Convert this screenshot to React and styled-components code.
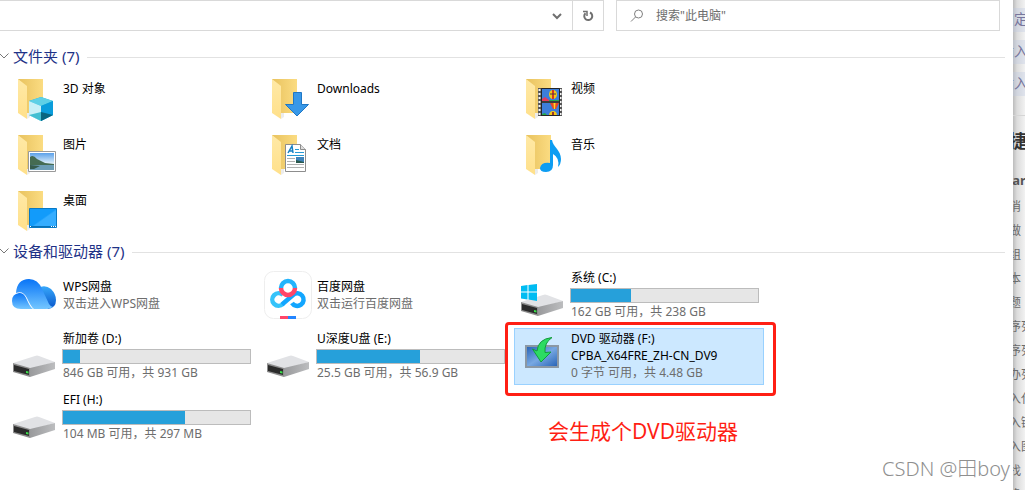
import React, { useState } from "react";
import styled, { createGlobalStyle } from "styled-components";

const GlobalStyle = createGlobalStyle`
  * {
    box-sizing: border-box;
  }
  body {
    margin: 0;
    background: #fff;
    font-family: "Noto Sans", "Noto Sans CJK SC", sans-serif;
    font-size: 12px;
    line-height: 17px;
    color: #000;
  }
`;

const Page = styled.div`
  display: flex;
  height: 100vh;
  overflow: hidden;
  position: relative;
`;
const Explorer = styled.main`
  flex: 1;
  min-width: 0;
`;
const Toolbar = styled.header`
  display: grid;
  grid-template-columns: 604fr 384fr;
  gap: 12px;
  height: 31px;
  padding-right: 13px;
`;
const AddressBar = styled.div`
  display: flex;
  justify-content: flex-end;
  border: 1px solid #d9d9d9;
  border-left: none;
`;
const BarButton = styled.button`
  width: 31px;
  padding: 0;
  border: none;
  border-left: ${(props) => (props.$divided ? "1px solid #d9d9d9" : "none")};
  background: none;
  display: flex;
  align-items: center;
  justify-content: center;
`;
const SearchBox = styled.label`
  display: flex;
  align-items: center;
  gap: 12px;
  padding-left: 13px;
  border: 1px solid #d9d9d9;
`;
const SearchInput = styled.input`
  flex: 1;
  min-width: 0;
  border: none;
  outline: none;
  padding: 0;
  background: none;
  font: inherit;
  &::placeholder {
    color: #6d6d6d;
    opacity: 1;
  }
`;
const Content = styled.div`
  padding: 13px 8px 0 0;
`;
const GroupTitle = styled.h2`
  display: flex;
  align-items: center;
  height: 26px;
  margin: 0;
  font-size: 15px;
  line-height: 24px;
  font-weight: 400;
  color: #1e3287;
  &::after {
    content: "";
    flex: 1;
    height: 1px;
    margin-left: 8px;
    background: #e2e2e2;
  }
`;
const GroupToggle = styled.button`
  display: flex;
  align-items: center;
  gap: 4px;
  height: 26px;
  padding: 0 0 2px;
  border: none;
  background: none;
  font: inherit;
  color: inherit;
`;
const Tiles = styled.div`
  display: grid;
  grid-template-columns: repeat(auto-fill, 250px);
  gap: 4px;
  padding: 2px 0 3px 6px;
`;
const Tile = styled.div`
  position: relative;
  display: flex;
  gap: 4px;
  height: ${(props) => (props.$folder ? "52px" : "57px")};
  padding: 0 5px 0 4px;
  background: ${(props) => (props.$selected ? "#cce8ff" : "none")};
  box-shadow: ${(props) =>
    props.$selected ? "inset 0 0 0 1px #99d1ff" : "none"};
`;
const TileIcon = styled.svg`
  flex: none;
  width: 48px;
  height: 48px;
  margin-top: ${(props) => (props.$folder ? "3px" : "4px")};
`;
const TileText = styled.div`
  flex: 1;
  min-width: 0;
  display: flex;
  flex-direction: column;
  justify-content: ${(props) => (props.$folder ? "flex-start" : "center")};
  padding-top: ${(props) => (props.$folder ? "9px" : "0")};
`;
const Line = styled.div`
  height: 17px;
  padding-left: 1px;
  line-height: 15px;
  white-space: nowrap;
  color: ${(props) => (props.$muted ? "#6d6d6d" : "#000")};
`;
const UsageBar = styled.div`
  height: 15px;
  margin: 1px 0;
  border: 1px solid #bcbcbc;
  background: #e6e6e6;
`;
const UsageFill = styled.div`
  height: 100%;
  background: #26a0da;
`;
const RedFrame = styled.div`
  position: absolute;
  inset: -6px -12px -11px -9px;
  border: 3px solid #ff1f14;
  border-radius: 4px;
`;
const RedNote = styled.div`
  position: absolute;
  top: 89px;
  left: 34px;
  font-size: 21px;
  line-height: 28px;
  white-space: nowrap;
  color: #ff1f14;
`;
const SidePanel = styled.aside`
  width: 12px;
  overflow: hidden;
  padding-top: 8px;
  color: #6b6b6b;
  background: linear-gradient(to right, #bcbcbc, #dcdcdc 4px, #f2f2f2);
`;
const SideChip = styled.div`
  height: 24px;
  margin-bottom: 8px;
  font-size: 14px;
  line-height: 22px;
  white-space: nowrap;
  text-indent: -13px;
  color: #77769c;
  background: rgba(190, 200, 225, 0.35);
`;
const SideHeading = styled.div`
  height: 52px;
  margin-top: 19px;
  border-top: 1px solid #d5d5d5;
  font-size: 18px;
  line-height: 50px;
  font-weight: 700;
  white-space: nowrap;
  text-indent: -4px;
  color: #333;
`;
const SideSubheading = styled.div`
  height: 28px;
  font-size: 13px;
  line-height: 26px;
  font-weight: 700;
  white-space: nowrap;
  text-indent: -13px;
  color: #555;
`;
const SideItem = styled.div`
  height: 24px;
  font-size: 12px;
  line-height: 24px;
  white-space: nowrap;
  text-indent: -16px;
`;
const Watermark = styled.div`
  position: absolute;
  right: 15px;
  bottom: 7px;
  font-size: 20px;
  line-height: 28px;
  font-weight: 300;
  color: #8f8f8f;
  text-shadow: 1px 1px 0 #fff;
`;

const FolderShape = () => (
  <>
    <path d="M8 4H33V38H8Z" fill="url(#folderBack)" />
    <path d="M8 4L17 11V44L8 38Z" fill="url(#folderFront)" />
    <path d="M17 38V44L20 42V38Z" fill="#d9d9d9" opacity="0.5" />
  </>
);

const DriveShape = () => (
  <>
    <path d="M3 31L25 24Q27 23 29 24L45 30L20 37Z" fill="#e1e2e5" />
    <path d="M20 36L45 30V37L20 45Z" fill="url(#driveSide)" />
    <path d="M3 31L20 36V45L3 40Z" fill="#8d8d8d" />
    <path d="M4 33L19 37V43L4 39Z" fill="#2b2b2b" />
    <path d="M16 39L18.500 39.500V41.500L16 41Z" fill="#3be04a" />
  </>
);

const folderArt = {
  cube: (
    <>
      <path d="M19 26L31 22L43 26V40L31 46L19 40Z" fill="#17b3d8" />
      <path d="M19 26L31 22L43 26L31 31Z" fill="#5fd0e6" />
      <path d="M19 26L31 31V46L19 40Z" fill="#c9f0f7" />
      <path d="M31 31L43 26V40L31 46Z" fill="#0a9ddb" />
      <path d="M19 40L31 37V46Z" fill="#43bfd2" />
      <path d="M31 37L43 40L31 46Z" fill="#08657f" />
    </>
  ),
  download: (
    <path
      d="M29.500 17.500H37.500V29.500H44.500L33 41L21.500 29.500H29.500Z"
      fill="#3898e8"
      stroke="#1f77c5"
    />
  ),
  video: (
    <>
      <path d="M20 13H44V41H20Z" fill="#555" />
      <path
        d="M21.500 14V41M42.500 14V41"
        stroke="#f4f4f4"
        strokeWidth="2"
        strokeDasharray="2 2"
      />
      <path d="M24 14H41V26H24ZM24 28H41V41H24Z" fill="#3d7edb" />
      <path d="M24 24L27 22L31 25L34 26H24Z" fill="#e63b5c" />
      <path d="M31 25H41V26H31ZM24 39L27 38L30 41H24Z" fill="#25a94b" />
      <ellipse cx="35" cy="19.500" rx="4" ry="4.500" fill="#f5c816" />
      <path d="M34 15H36L36 24H34Z" fill="#d63820" />
      <path d="M32 19H38" stroke="#4a3a4a" />
      <path d="M32 28H41L38 34H35Z" fill="#e84824" />
      <path d="M35.500 28H37.500L37 34H36Z" fill="#f8db25" />
      <path d="M31 41Q31 36 35 36T39 41Z" fill="#f5c816" />
      <path d="M34 37H36V41H34Z" fill="#9a3430" />
      <path d="M23.500 41V13.500H41.500V41M24 27H41M24 40.500H41" stroke="#252525" fill="none" />
    </>
  ),
  picture: (
    <>
      <path d="M18.500 20.500H45.500V40.500H18.500Z" fill="#fff" stroke="#9a9a9a" />
      <path d="M20 22H44V39H20Z" fill="url(#sky)" />
      <path d="M20 26Q23 23 27 28L35 32L44 33V35H20Z" fill="#456b52" />
      <path d="M20 34H44V39H20Z" fill="#6c9db5" />
      <path d="M20 34L30 35L24 38H20Z" fill="#365b4c" />
    </>
  ),
  document: (
    <>
      <path d="M21.500 13.500H36.500L41.500 18.500V40.500H21.500Z" fill="#fff" stroke="#8d8d8d" />
      <path d="M36.500 13.500V18.500H41.500" fill="#ddd" stroke="#8d8d8d" />
      <path d="M24 22L28 15L29 22M25.500 20H29" fill="none" stroke="#1680c4" strokeWidth="1.500" />
      <path d="M31 18.500H35M31 21.500H40M23 24.500H40" stroke="#269ad6" />
      <path d="M23 27.500H31M23 30.500H31M23 33.500H40M23 36.500H40" stroke="#b0b0b0" />
      <path d="M32 26H40V32H32Z" fill="#3f83ba" />
      <path d="M32 29L40 31V32H32Z" fill="#29584c" />
    </>
  ),
  music: (
    <path
      d="M32 9H34C35 16 43 19 43 28Q43 33 40 36Q42 27 35 23V34Q35 41 28 41Q22 41 22 37Q23 31 32 32Z"
      fill="#0d9df2"
    />
  ),
  desktop: (
    <>
      <path d="M19.500 21.500H46.500V40.500H19.500Z" fill="url(#desk)" stroke="#0879c4" />
      <path d="M20 39.500H46" stroke="#0872b8" />
      <path d="M20 39.500H21M41 39.500H42M43 39.500H44M45 39.500H46" stroke="#fff" />
    </>
  ),
};

const deviceArt = {
  wps: (
    <>
      <path d="M28 17Q35 13 41 18Q46 23 46 29Q46 37 38 38L28 27Z" fill="url(#cloudBack)" />
      <path d="M6 22Q7 8 19 8Q28 8 32 18L39 33Q41 36 43 36Q40 38 36 38H24Q21 36 17 27Q13 19 6 22Z" fill="url(#cloud)" />
      <path d="M11 38Q2 38 2 30Q2 23 9 22Q14 21 17 29Q20 36 23 38Z" fill="url(#cloud)" />
    </>
  ),
  baidu: (
    <>
      <rect x="0.500" y="0.500" width="47" height="47" rx="9" fill="#fff" stroke="#eee" />
      <g fill="none" strokeWidth="4.500">
        <path d="M19 33A6.300 6.300 0 1 1 19 24" stroke="#35c3fa" />
        <path d="M18 33.500L29 24A6.300 6.300 0 1 1 28 32" stroke="#12a6ff" />
        <path d="M17 17A7 7 0 0 1 31 17" stroke="#22b4fc" />
        <path d="M17 17A7 7 0 0 0 31 17" stroke="#ff4669" />
      </g>
      <path d="M16 45H24V48H16Z" fill="#ff4669" />
      <path d="M24 45H32V48H24Z" fill="#2385ff" />
    </>
  ),
  drive: <DriveShape />,
  system: (
    <>
      <DriveShape />
      <path d="M3 15L9.500 14V20.500H3ZM10.500 14L19 13V20.500H10.500ZM3 21.500H9.500V28.500L3 27.500ZM10.500 21.500H19V30L10.500 28.500Z" fill="#00bcf2" />
    </>
  ),
  dvd: (
    <>
      <path d="M8 14H40V35H8Z" fill="url(#screen)" stroke="#8b98a4" strokeWidth="2" />
      <path d="M34 5.500Q20 7 19 19L14.500 17L23 30L33 20L27 20.500Q26 11 34 5.500Z" fill="#2cdb62" stroke="#139b3d" />
    </>
  ),
};

const folders = [
  { name: "3D 对象", art: "cube" },
  { name: "Downloads", art: "download" },
  { name: "视频", art: "video" },
  { name: "图片", art: "picture" },
  { name: "文档", art: "document" },
  { name: "音乐", art: "music" },
  { name: "桌面", art: "desktop" },
];

const devices = [
  { name: "WPS网盘", info: "双击进入WPS网盘", art: "wps" },
  { name: "百度网盘", info: "双击运行百度网盘", art: "baidu" },
  { name: "系统 (C:)", info: "162 GB 可用，共 238 GB", used: 32, art: "system" },
  { name: "新加卷 (D:)", info: "846 GB 可用，共 931 GB", used: 9, art: "drive" },
  { name: "U深度U盘 (E:)", info: "25.5 GB 可用，共 56.9 GB", used: 55, art: "drive" },
  {
    name: "DVD 驱动器 (F:)",
    label: "CPBA_X64FRE_ZH-CN_DV9",
    info: "0 字节 可用，共 4.48 GB",
    art: "dvd",
    note: "会生成个DVD驱动器",
  },
  { name: "EFI (H:)", info: "104 MB 可用，共 297 MB", used: 65, art: "drive" },
];

const sideItems = [
  "撤消", "重做", "粗组", "斜本", "标题", "有序列", "无序列",
  "待办列", "插入代", "插入链", "插入图", "查找", "替换",
];

const Gradients = () => (
  <svg width="0" height="0" style={{ position: "absolute" }} aria-hidden="true">
    <defs>
      <linearGradient id="folderBack">
        <stop stopColor="#e8c25e" />
        <stop offset="1" stopColor="#fbdc82" />
      </linearGradient>
      <linearGradient id="folderFront" x2="0" y2="1">
        <stop stopColor="#ffe9a6" />
        <stop offset="1" stopColor="#ffe08a" />
      </linearGradient>
      <linearGradient id="driveSide">
        <stop stopColor="#999a9c" />
        <stop offset="1" stopColor="#bcbdbf" />
      </linearGradient>
      <linearGradient id="sky" x2="0" y2="1">
        <stop stopColor="#5aa0ea" />
        <stop offset="0.600" stopColor="#dcedf8" />
      </linearGradient>
      <linearGradient id="desk" y2="1">
        <stop offset="0.500" stopColor="#129bfa" />
        <stop offset="0.550" stopColor="#35adff" />
      </linearGradient>
      <linearGradient id="cloud" x2="0" y2="1">
        <stop stopColor="#0874f7" />
        <stop offset="1" stopColor="#74c6ff" />
      </linearGradient>
      <linearGradient id="cloudBack" x2="0" y2="1">
        <stop stopColor="#38a9fb" />
        <stop offset="1" stopColor="#0754c9" />
      </linearGradient>
      <linearGradient id="screen" y2="1">
        <stop stopColor="#2460b4" />
        <stop offset="0.500" stopColor="#77a8e2" />
        <stop offset="1" stopColor="#2460b4" />
      </linearGradient>
    </defs>
  </svg>
);

const Group = ({ title, children }) => {
  const [open, setOpen] = useState(true);
  return (
    <section>
      <GroupTitle>
        <GroupToggle aria-expanded={open} onClick={() => setOpen(!open)}>
          <svg width="9" height="8" fill="none" stroke="#777">
            <path d="M0 2L4 6L8.500 1.500" />
          </svg>
          {title}
        </GroupToggle>
      </GroupTitle>
      {open && <Tiles>{children}</Tiles>}
    </section>
  );
};

const Folder = ({ name, art }) => (
  <Tile $folder>
    <TileIcon $folder viewBox="0 0 48 48" aria-hidden="true">
      <FolderShape />
      {folderArt[art]}
    </TileIcon>
    <TileText $folder>
      <Line>{name}</Line>
    </TileText>
  </Tile>
);

const Device = ({ name, label, info, used, art, note }) => (
  <Tile $selected={Boolean(note)}>
    <TileIcon viewBox="0 0 48 48" aria-hidden="true">
      {deviceArt[art]}
    </TileIcon>
    <TileText>
      <Line>{name}</Line>
      {label && <Line>{label}</Line>}
      {used !== undefined && (
        <UsageBar>
          <UsageFill style={{ width: `${used}%` }} />
        </UsageBar>
      )}
      <Line $muted>{info}</Line>
    </TileText>
    {note && <RedFrame />}
    {note && <RedNote>{note}</RedNote>}
  </Tile>
);

const App = () => (
  <>
    <GlobalStyle />
    <Gradients />
    <Page>
      <Explorer>
        <Toolbar>
          <AddressBar>
            <BarButton aria-label="历史记录">
              <svg width="10" height="8" fill="none" stroke="#707070" strokeWidth="2">
                <path d="M1 2L5 6L9 2" />
              </svg>
            </BarButton>
            <BarButton $divided aria-label="刷新">
              <svg width="12" height="12" fill="none" stroke="#707070" strokeWidth="2">
                <path d="M8 2.500A4 4 0 1 1 3.500 3.200" />
                <path d="M1 1.500H5V6" strokeWidth="1.500" />
              </svg>
            </BarButton>
          </AddressBar>
          <SearchBox>
            <svg width="14" height="14" fill="none" stroke="#808080" aria-hidden="true">
              <circle cx="8.500" cy="5" r="4" />
              <path d="M5.500 8L1 12.500" />
            </svg>
            <SearchInput aria-label="搜索" placeholder={'搜索"此电脑"'} />
          </SearchBox>
        </Toolbar>
        <Content>
          <Group title="文件夹 (7)">
            {folders.map((folder) => (
              <Folder key={folder.name} {...folder} />
            ))}
          </Group>
          <Group title="设备和驱动器 (7)">
            {devices.map((device) => (
              <Device key={device.name} {...device} />
            ))}
          </Group>
        </Content>
      </Explorer>
      <SidePanel>
        <SideChip>固定</SideChip>
        <SideChip>插入</SideChip>
        <SideChip>插入</SideChip>
        <SideHeading>捷键</SideHeading>
        <SideSubheading>Markdown</SideSubheading>
        {sideItems.map((item) => (
          <SideItem key={item}>{item}</SideItem>
        ))}
      </SidePanel>
      <Watermark>CSDN @田boy</Watermark>
    </Page>
  </>
);

export default App;
